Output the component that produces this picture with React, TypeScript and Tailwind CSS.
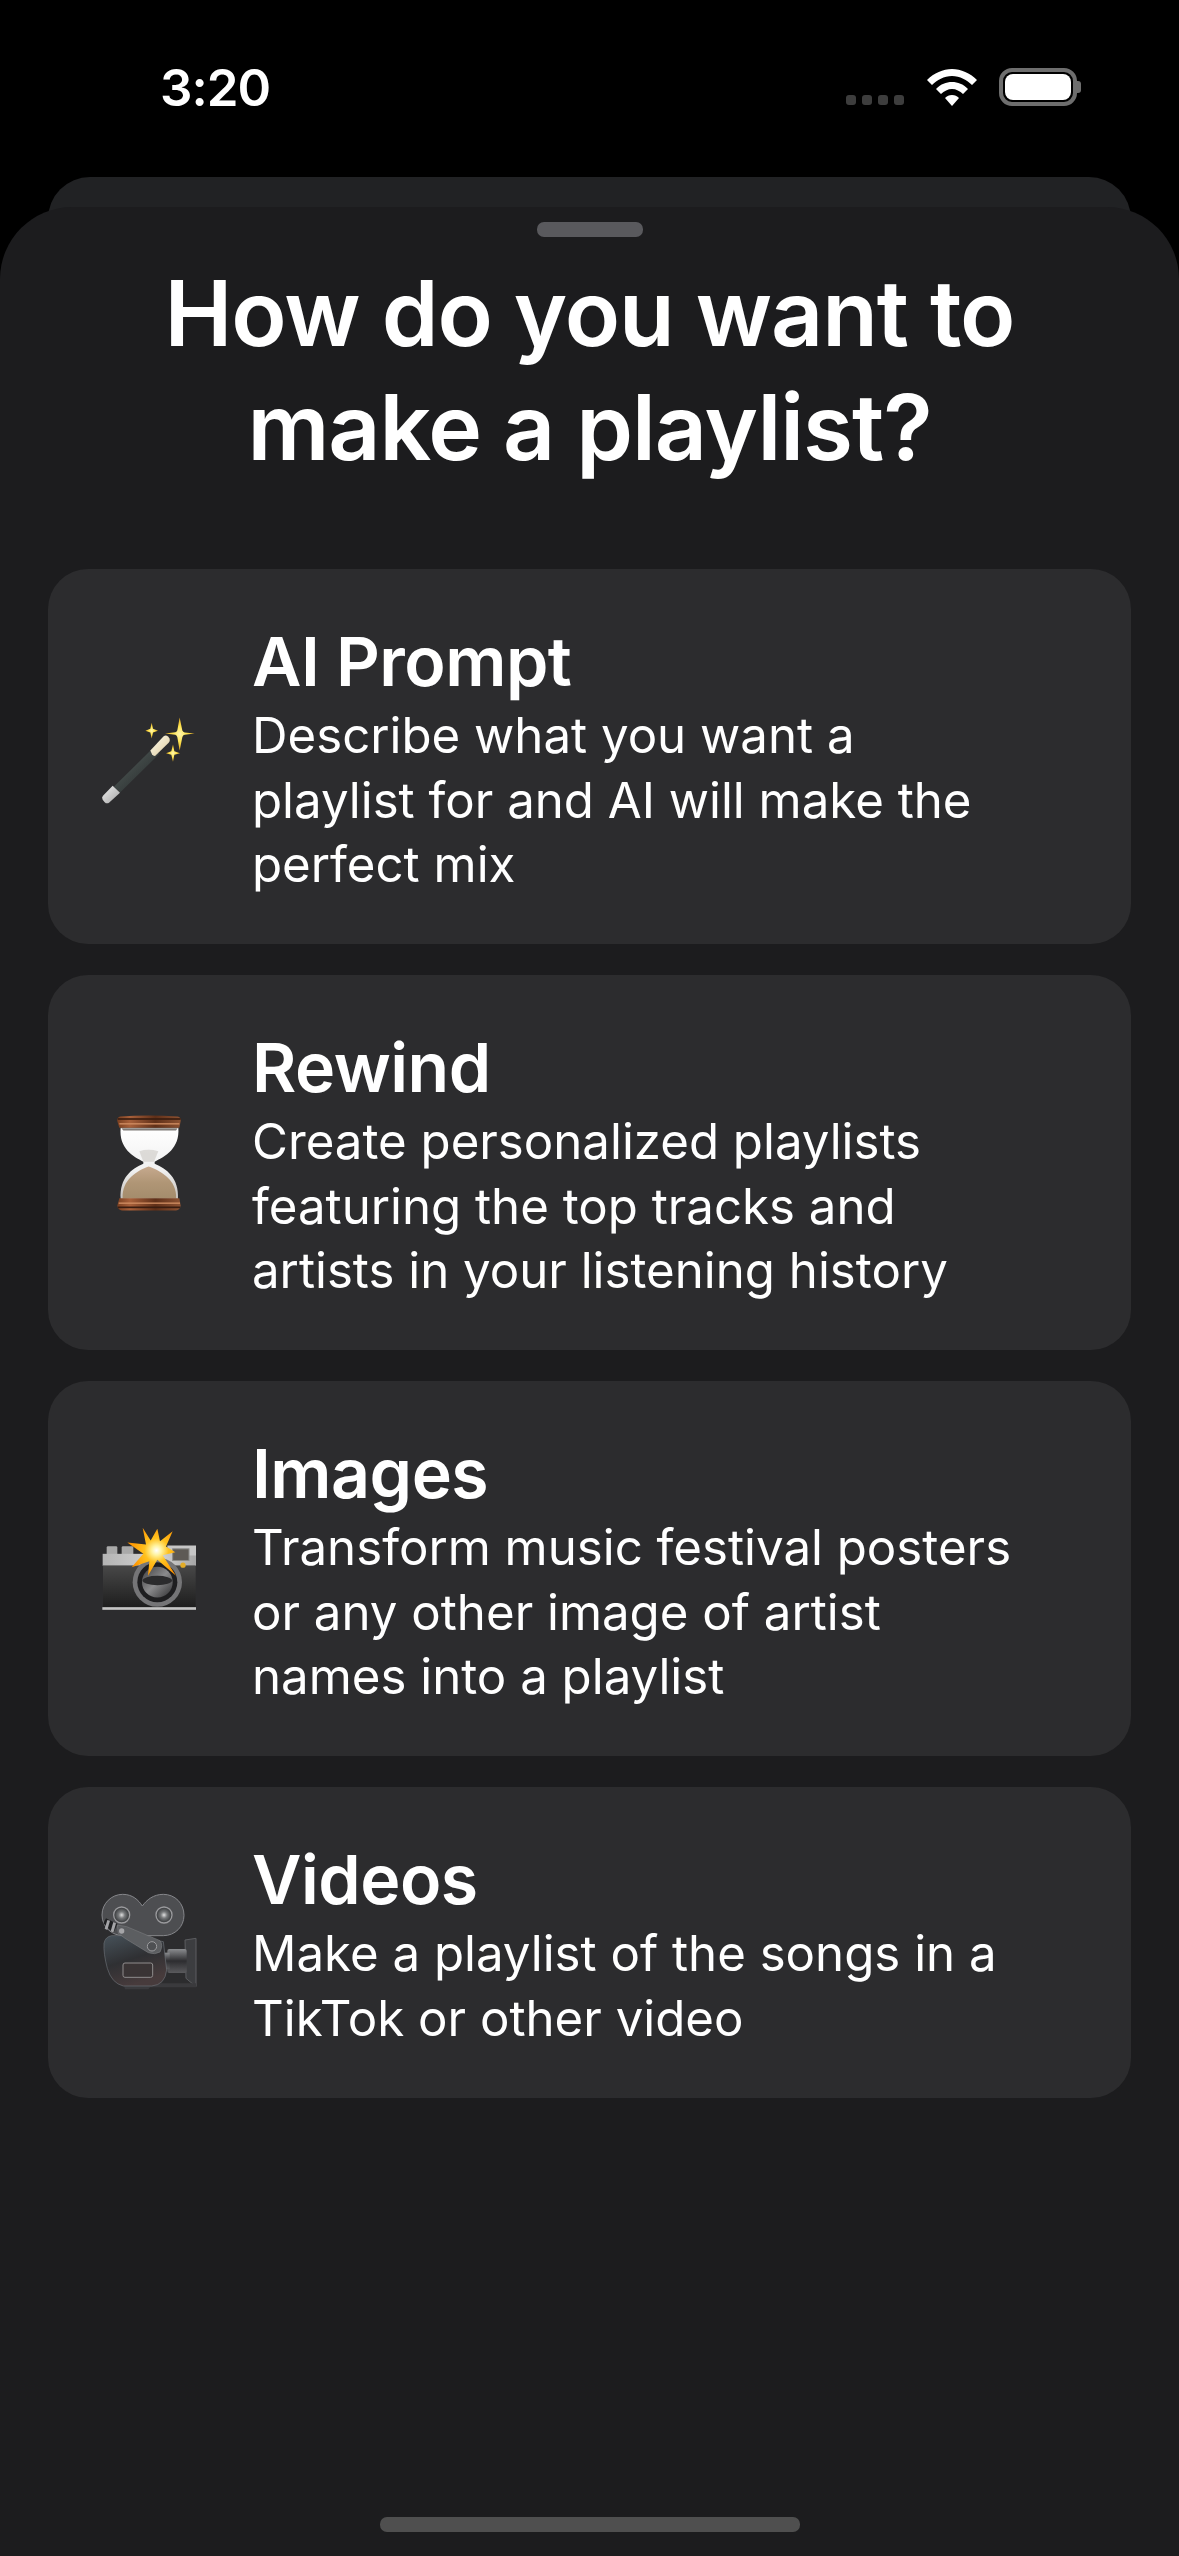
import React from "react";

const Wand = () => (
  <svg width="150" height="150" viewBox="0 -25.5 450 450" className="shrink-0">
    <defs>
      <linearGradient id="wb" x1="0" y1="0" x2="1" y2="1"><stop offset="0" stopColor="#5b6462" /><stop offset="0.5" stopColor="#3c4342" /><stop offset="1" stopColor="#23282a" /></linearGradient>
      <linearGradient id="wt" x1="0" y1="0" x2="1" y2="1"><stop offset="0" stopColor="#fffdf0" /><stop offset="1" stopColor="#dcc99c" /></linearGradient>
      <linearGradient id="ww" x1="0" y1="0" x2="1" y2="1"><stop offset="0" stopColor="#f0f0f0" /><stop offset="1" stopColor="#a2a2a2" /></linearGradient>
      <radialGradient id="ws"><stop offset="0" stopColor="#fff6b0" /><stop offset="0.45" stopColor="#ffe552" /><stop offset="1" stopColor="#e2a81f" /></radialGradient>
    </defs>
    <path d="M132 288 L250 172 L268 190 L150 306 Z" fill="url(#wb)" />
    <path d="M241 180 L281 137 Q288 132 295 139 L299 145 Q301 152 296 157 L256 196 Q250 197 246 191 Z" fill="url(#wt)" />
    <path d="M128 286 L150 307 L117 337 Q110 341 104 335 L98 328 Q94 321 99 316 Z" fill="url(#ww)" />
    <path d="M329 81 L337 120 Q339 125 344 126 L374 129 L344 133 Q338 134 337 140 L329 180 L322 140 Q321 135 316 133 L285 129 L316 125 Q321 124 322 119 Z" fill="url(#ws)" />
    <path d="M245 97 L249 115 L264 121 L249 126 L245 144 L241 126 L226 121 L241 115 Z" fill="url(#ws)" />
    <path d="M309 162 L313 182 L330 188 L313 193 L309 214 L304 193 L288 188 L304 182 Z" fill="url(#ws)" />
  </svg>
);

const Hourglass = () => (
  <svg width="150" height="150" viewBox="-30 -7.5 450 450" className="shrink-0">
    <defs>
      <linearGradient id="hc" x1="0" y1="0" x2="1" y2="0"><stop offset="0" stopColor="#7a3f20" /><stop offset="0.2" stopColor="#a8603a" /><stop offset="0.6" stopColor="#5f2f18" /><stop offset="1" stopColor="#8d5232" /></linearGradient>
      <linearGradient id="hg" x1="0" y1="0" x2="0" y2="1"><stop offset="0" stopColor="#ffffff" /><stop offset="0.6" stopColor="#f0f0f0" /><stop offset="1" stopColor="#c4c0bb" /></linearGradient>
      <linearGradient id="hs" x1="0" y1="0" x2="0" y2="1"><stop offset="0" stopColor="#c6a98e" /><stop offset="0.5" stopColor="#b09676" /><stop offset="1" stopColor="#a48c6c" /></linearGradient>
    </defs>
    <path d="M122 112 L295 112 C300 175 255 198 224 214 L224 220 C258 234 298 262 294 326 L122 326 C118 262 156 234 190 220 L190 214 C160 198 116 175 122 112 Z" fill="url(#hg)" />
    <path d="M206 228 C240 240 292 268 288 324 L128 324 C124 268 172 240 206 228 Z" fill="url(#hs)" />
    <path d="M178 182 Q205 174 235 182 L222 214 L190 214 Z" fill="#d6d3cf" opacity="0.8" />
    <path d="M124 113 H293 L288 120 H130 Z" fill="#55504c" opacity="0.75" />
    <path d="M120 78 Q205 72 294 78 Q304 82 302 92 L298 112 L118 112 L112 92 Q110 82 120 78 Z" fill="url(#hc)" />
    <rect x="113" y="83" width="189" height="5" fill="#3a1d10" />
    <rect x="118" y="98" width="180" height="4" fill="#d08d62" />
    <path d="M118 323 H298 L302 345 Q300 358 288 360 H126 Q114 358 112 345 Z" fill="url(#hc)" />
    <rect x="116" y="336" width="184" height="4" fill="#d08d62" />
    <rect x="114" y="348" width="186" height="5" fill="#3a1d10" />
  </svg>
);

const CameraFlash = () => (
  <svg width="150" height="150" viewBox="-30 -19.5 450 450" className="shrink-0">
    <defs>
      <linearGradient id="cs" x1="0" y1="0" x2="1" y2="0"><stop offset="0" stopColor="#b4b4b4" /><stop offset="0.6" stopColor="#d4d4d4" /><stop offset="1" stopColor="#a6a6a6" /></linearGradient>
      <linearGradient id="cb" x1="0" y1="0" x2="0" y2="1"><stop offset="0" stopColor="#484848" /><stop offset="1" stopColor="#1e1e1e" /></linearGradient>
      <linearGradient id="cl" x1="0" y1="0" x2="1" y2="1"><stop offset="0" stopColor="#3c3c3e" /><stop offset="0.5" stopColor="#8a8a8c" /><stop offset="1" stopColor="#2e2e30" /></linearGradient>
      <radialGradient id="cf" cx="0.6" cy="0.47" r="0.55"><stop offset="0" stopColor="#ffffff" /><stop offset="0.18" stopColor="#fff3a0" /><stop offset="0.45" stopColor="#ffc21f" /><stop offset="1" stopColor="#ff9400" /></radialGradient>
    </defs>
    <rect x="80" y="137" width="32" height="28" rx="4" fill="#a9a9a9" />
    <rect x="125" y="137" width="35" height="28" rx="4" fill="#a9a9a9" />
    <rect x="68" y="160" width="280" height="36" fill="url(#cs)" />
    <rect x="262" y="135" width="86" height="30" fill="#c6c6c6" />
    <rect x="69" y="195" width="278" height="125" fill="url(#cb)" />
    <rect x="67" y="320" width="281" height="8" fill="#c4c4c4" />
    <rect x="278" y="145" width="49" height="35" fill="#5e5a55" stroke="#8a8a88" strokeWidth="3" />
    <circle cx="309" cy="194" r="8" fill="#e2ac27" />
    <circle cx="232" cy="245" r="74" fill="#757577" />
    <circle cx="232" cy="245" r="60" fill="#1e1e20" />
    <circle cx="232" cy="245" r="46" fill="url(#cl)" />
    <ellipse cx="232" cy="240" rx="44" ry="14" fill="#2b2b2d" />
    <path d="M188 82 L212 120 L232 85 L240 122 L278 92 L258 138 L286 155 L248 164 L288 226 L232 178 L204 226 L208 182 L155 200 L190 160 L142 126 L198 132 Z" fill="url(#cf)" />
  </svg>
);

const MovieCamera = () => (
  <svg width="150" height="150" viewBox="-30 -9 450 450" className="shrink-0">
    <defs>
      <linearGradient id="mb" x1="0" y1="0" x2="0.4" y2="1"><stop offset="0" stopColor="#47525a" /><stop offset="0.55" stopColor="#2f3033" /><stop offset="1" stopColor="#473b3c" /></linearGradient>
      <linearGradient id="ml" x1="0" y1="0" x2="0" y2="1"><stop offset="0" stopColor="#8a8c8f" /><stop offset="0.5" stopColor="#2d2d30" /><stop offset="1" stopColor="#5a5a5d" /></linearGradient>
      <radialGradient id="mh"><stop offset="0" stopColor="#e0e0e0" /><stop offset="0.4" stopColor="#77797b" /><stop offset="1" stopColor="#303234" /></radialGradient>
    </defs>
    <path d="M128 73 C158 73 175 90 187 108 C200 90 220 73 250 73 C285 73 312 100 312 136 C312 170 285 197 250 197 L130 197 C95 197 66 170 66 135 C66 100 95 73 128 73 Z" fill="#4d4e51" stroke="#85868a" strokeWidth="3" />
    <circle cx="125" cy="135" r="24" fill="url(#mh)" stroke="#9a9a9d" strokeWidth="4" />
    <circle cx="252" cy="135" r="24" fill="url(#mh)" stroke="#9a9a9d" strokeWidth="4" />
    <path d="M315 210 L348 205 L348 350 L318 325 Z" fill="#3c3d40" stroke="#5c5d60" strokeWidth="3" />
    <rect x="262" y="237" width="58" height="72" rx="6" fill="url(#ml)" />
    <rect x="245" y="248" width="24" height="50" fill="url(#ml)" />
    <path d="M130 340 H348 V352 H210 L205 358 H135 Z" fill="#3a3a3d" />
    <path d="M95 197 H150 L250 215 L260 300 Q255 345 215 348 H130 Q95 340 82 295 Q70 250 72 220 Q76 200 95 197 Z" fill="url(#mb)" stroke="#6b7075" strokeWidth="2" />
    <rect x="129" y="279" width="89" height="43" rx="6" fill="#3a3435" stroke="#8f8c8d" strokeWidth="3" />
    <path d="M112 165 L140 170 L240 212 Q250 225 240 246 Q225 255 205 248 L135 205 L115 190 Z" fill="#5c5e61" stroke="#77797c" strokeWidth="2" />
    <circle cx="216" cy="229" r="14" fill="#4e5053" stroke="#9c9c9f" strokeWidth="3" />
    <circle cx="125" cy="183" r="8" fill="#a5a5a8" />
    <path d="M70 160 L78 145 L112 162 L100 190 Z" fill="#1f2022" />
    <path d="M82 150 L90 152 L82 180 L74 176 Z" fill="#a5a5a8" />
    <path d="M100 156 L108 160 L100 188 L92 184 Z" fill="#a5a5a8" />
  </svg>
);

const items = [
  { icon: <Wand />, title: "AI Prompt", desc: "Describe what you want a playlist for and AI will make the perfect mix" },
  { icon: <Hourglass />, title: "Rewind", desc: "Create personalized playlists featuring the top tracks and artists in your listening history" },
  { icon: <CameraFlash />, title: "Images", desc: "Transform music festival posters or any other image of artist names into a playlist" },
  { icon: <MovieCamera />, title: "Videos", desc: "Make a playlist of the songs in a TikTok or other video" },
];

export default function App() {
  return (
    <div className="w-[1179px] h-[2556px] bg-black flex flex-col overflow-hidden text-white font-['Inter',sans-serif]">
      <div className="h-[177px] shrink-0 flex items-start justify-between pl-[160px] pr-[98px] pt-[56px]">
        <span className="text-[51px] leading-[63px] font-semibold tracking-[-1px]">3:20</span>
        <div className="flex items-end gap-[22px] pt-[12px]">
          <div className="flex gap-[6px] mb-[1px] mr-[1px]">
            <span className="w-[10px] h-[10px] rounded-[3px] bg-[#3d3d3d]" />
            <span className="w-[10px] h-[10px] rounded-[3px] bg-[#3d3d3d]" />
            <span className="w-[10px] h-[10px] rounded-[3px] bg-[#3d3d3d]" />
            <span className="w-[10px] h-[10px] rounded-[3px] bg-[#3d3d3d]" />
          </div>
          <svg width="50" height="37" viewBox="0 0 50 37">
            <path d="M25 0 C34 0 43 4 50 11 L45 16 C40 11 33 7 25 7 C17 7 10 11 5 16 L0 11 C7 4 16 0 25 0 Z" fill="#fff" />
            <path d="M25 13 C31 13 36 15 41 20 L36 25 C33 22 29 20 25 20 C21 20 17 22 14 25 L9 20 C14 15 19 13 25 13 Z" fill="#fff" />
            <path d="M25 26 C28 26 30 27 32 29 L25 37 L18 29 C20 27 22 26 25 26 Z" fill="#fff" />
          </svg>
          <div className="flex items-center">
            <div className="w-[78px] h-[38px] rounded-[13px] border-[4px] border-[#6e6e6e] p-[2px]">
              <div className="w-full h-full rounded-[8px] bg-white" />
            </div>
            <div className="w-[4px] h-[12px] rounded-r-[3px] bg-[#6e6e6e]" />
          </div>
        </div>
      </div>
      <div className="h-[60px] shrink-0 mx-[48px] -mb-[30px] bg-[#212224] rounded-t-[42px]" />
      <div className="relative flex-1 bg-[#1c1c1e] rounded-t-[72px] flex flex-col items-center">
        <div className="w-[106px] h-[15px] mt-[15px] rounded-[7px] bg-[#59595d]" />
        <h1 className="mt-[19px] text-center text-[91px] leading-[114px] font-semibold tracking-[-1px] w-[1000px]">
          How do you want to make a playlist?
        </h1>
        <div className="mt-[85px] w-full px-[48px] flex flex-col gap-[31px]">
          {items.map((it) => (
            <div key={it.title} className="bg-[#2c2c2e] rounded-[40px] flex items-center pl-[22px] gap-[32px] py-[49.4px]">
              {it.icon}
              <div className="w-[765px] pt-[2px] -mb-[2px]">
                <div className="text-[68px] leading-[83px] font-semibold tracking-[-0.5px]">{it.title}</div>
                <div className="text-[49.2px] leading-[64.4px] font-normal">{it.desc}</div>
              </div>
            </div>
          ))}
        </div>
        <div className="mt-auto mb-[24px] w-[420px] h-[15px] rounded-[7px] bg-[#4f4f4f]" />
      </div>
    </div>
  );
}
